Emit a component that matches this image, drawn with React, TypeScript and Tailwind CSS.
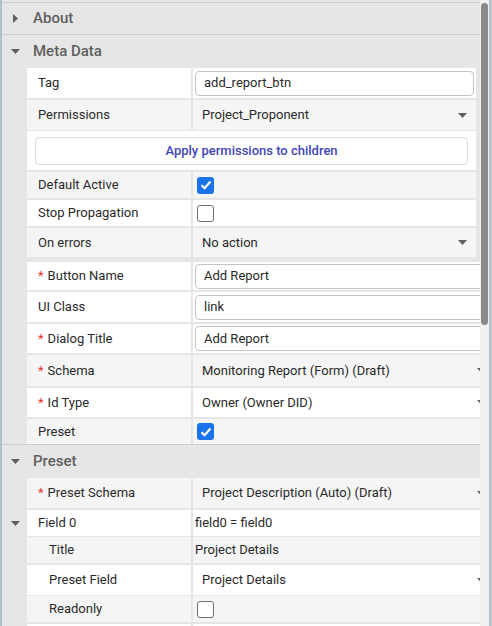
import React from "react";

const CaretDown = ({ className = "" }: { className?: string }) => (
  <svg width="9" height="5" viewBox="0 0 9 5" className={className}>
    <path d="M0 0 L9 0 L4.5 5 Z" fill="#5f5f5f" />
  </svg>
);
const CaretRight = () => (
  <svg width="5" height="9" viewBox="0 0 5 9">
    <path d="M0 0 L5 4.5 L0 9 Z" fill="#5f5f5f" />
  </svg>
);

const Check = ({ on }: { on: boolean }) =>
  on ? (
    <div className="w-[17px] h-[17px] rounded-[3px] bg-[#1a73e8] flex items-center justify-center">
      <svg width="12" height="10" viewBox="0 0 12 10">
        <path d="M1.5 5.2 L4.6 8.2 L10.5 1.6" stroke="#fff" strokeWidth="2.2" fill="none" />
      </svg>
    </div>
  ) : (
    <div className="w-[17px] h-[17px] rounded-[3px] border-[1.5px] border-[#6f6f6f] bg-white" />
  );

const Req = () => <span className="text-[#e53935] mr-[4px]">*</span>;

function Row({
  label,
  req,
  bg,
  h,
  indent,
  children,
  wide,
  mt = 2,
}: {
  label: string;
  req?: boolean;
  bg: string;
  h: number;
  indent?: boolean;
  children?: React.ReactNode;
  wide?: boolean;
  mt?: number;
}) {
  return (
    <div
      className={`flex gap-[2px] ${wide ? "" : "mr-[4px]"}`}
      style={{ height: h, marginTop: mt }}
    >
      <div
        className={`w-[164px] shrink-0 flex items-center ${indent ? "pl-[22px]" : "pl-[11px]"} ${bg}`}
      >
        {req && <Req />}
        <span>{label}</span>
      </div>
      <div className={`flex-1 min-w-0 overflow-hidden flex items-center ${bg}`}>{children}</div>
    </div>
  );
}

const Select = ({ text, clip }: { text: string; clip?: boolean }) => (
  <div className="flex-1 flex items-center justify-between pl-[9px]">
    <span>{text}</span>
    <CaretDown className={clip ? "mr-[-6px]" : "mr-[9px]"} />
  </div>
);

const Input = ({ text, clip }: { text: string; clip?: boolean }) => (
  <div
    className={`flex-1 h-[25px] ml-[2px] border border-[#c4c4c4] rounded-[4px] bg-white flex items-center pl-[8px] ${clip ? "mr-[-10px]" : "mr-[2px]"}`}
  >
    {text}
  </div>
);

export default function App() {
  return (
    <div
      className="w-[492px] h-[626px] overflow-hidden flex bg-[#b9c6cd] text-[13px] text-[#2a2a2a]"
      style={{ fontFamily: "Roboto, 'Noto Sans', sans-serif" }}
    >
      <div className="w-[2px] shrink-0 bg-[#b3c1c9]" />
      <div className="w-[478px] shrink-0 h-full bg-[#e6e6e6] overflow-hidden">
        <div className="h-[2px] bg-[#e6e6e6]" />
        <div className="h-[33px] border-t border-b border-[#cdcdcd] flex items-center pl-[11px]">
          <CaretRight />
          <span className="ml-[15px] text-[15px] font-medium text-[#5f5f5f]">About</span>
        </div>
        <div className="h-[33px] flex items-center pl-[9px]">
          <CaretDown />
          <span className="ml-[13px] text-[15px] font-medium text-[#5f5f5f]">Meta Data</span>
        </div>
        <div className="pl-[25px]">
          <Row label="Tag" bg="bg-white" h={30} mt={0}>
            <Input text="add_report_btn" />
          </Row>
          <Row label="Permissions" bg="bg-[#f5f5f5]" h={30}>
            <Select text="Project_Proponent" />
          </Row>
          <div className="mt-[1px] mr-[4px] h-[39px] bg-white flex items-center px-[8px]">
            <div className="flex-1 h-[28px] border border-[#dcdcdc] rounded-[4px] flex items-center justify-center text-[#3f46b8] font-medium">
              Apply permissions to children
            </div>
          </div>
          <Row label="Default Active" bg="bg-[#f5f5f5]" h={26}>
            <div className="pl-[4px]">
              <Check on={true} />
            </div>
          </Row>
          <Row label="Stop Propagation" bg="bg-white" h={26}>
            <div className="pl-[4px]">
              <Check on={false} />
            </div>
          </Row>
          <Row label="On errors" bg="bg-[#f5f5f5]" h={29}>
            <Select text="No action" />
          </Row>
          <Row label="Button Name" req bg="bg-white" h={28} mt={5} wide>
            <Input text="Add Report" clip />
          </Row>
          <Row label="UI Class" bg="bg-white" h={30} wide>
            <Input text="link" clip />
          </Row>
          <Row label="Dialog Title" req bg="bg-white" h={29} wide>
            <Input text="Add Report" clip />
          </Row>
          <Row label="Schema" req bg="bg-[#f5f5f5]" h={31} wide>
            <Select text="Monitoring Report (Form) (Draft)" clip />
          </Row>
          <Row label="Id Type" req bg="bg-white" h={29} wide>
            <Select text="Owner (Owner DID)" clip />
          </Row>
          <Row label="Preset" bg="bg-[#f5f5f5]" h={25} wide>
            <div className="pl-[4px]">
              <Check on={true} />
            </div>
          </Row>
        </div>
        <div className="h-[34px] border-t border-[#cdcdcd] flex items-center pl-[9px]">
          <CaretDown />
          <span className="ml-[13px] text-[15px] font-medium text-[#5f5f5f]">Preset</span>
        </div>
        <div className="pl-[25px]">
          <Row label="Preset Schema" req bg="bg-[#f5f5f5]" h={30} mt={0} wide>
            <Select text="Project Description (Auto) (Draft)" clip />
          </Row>
          <div className="flex mt-[2px] h-[26px] ml-[-25px]">
            <div className="w-[25px] shrink-0 flex items-center pl-[9px]">
              <CaretDown />
            </div>
            <div className="flex-1 flex gap-[2px]">
              <div className="w-[164px] shrink-0 flex items-center pl-[11px] bg-white">
                <span>Field 0</span>
              </div>
              <div className="flex-1 bg-white flex items-center pl-[2px]">field0 = field0</div>
            </div>
          </div>
          <Row label="Title" indent bg="bg-[#f5f5f5]" h={26} mt={1} wide>
            <span className="pl-[2px]">Project Details</span>
          </Row>
          <Row label="Preset Field" indent bg="bg-white" h={30} wide>
            <Select text="Project Details" clip />
          </Row>
          <Row label="Readonly" indent bg="bg-[#f5f5f5]" h={26} mt={1} wide>
            <div className="pl-[4px]">
              <Check on={false} />
            </div>
          </Row>
          <Row label="" bg="bg-white" h={30} wide>
            <span />
          </Row>
        </div>
      </div>
      <div className="w-[9px] shrink-0 h-full bg-[#f1f1f1] pt-[3px] flex justify-center">
        <div className="w-[7px] h-[322px] rounded-[4px] bg-[#8a8a8a]" />
      </div>
    </div>
  );
}
